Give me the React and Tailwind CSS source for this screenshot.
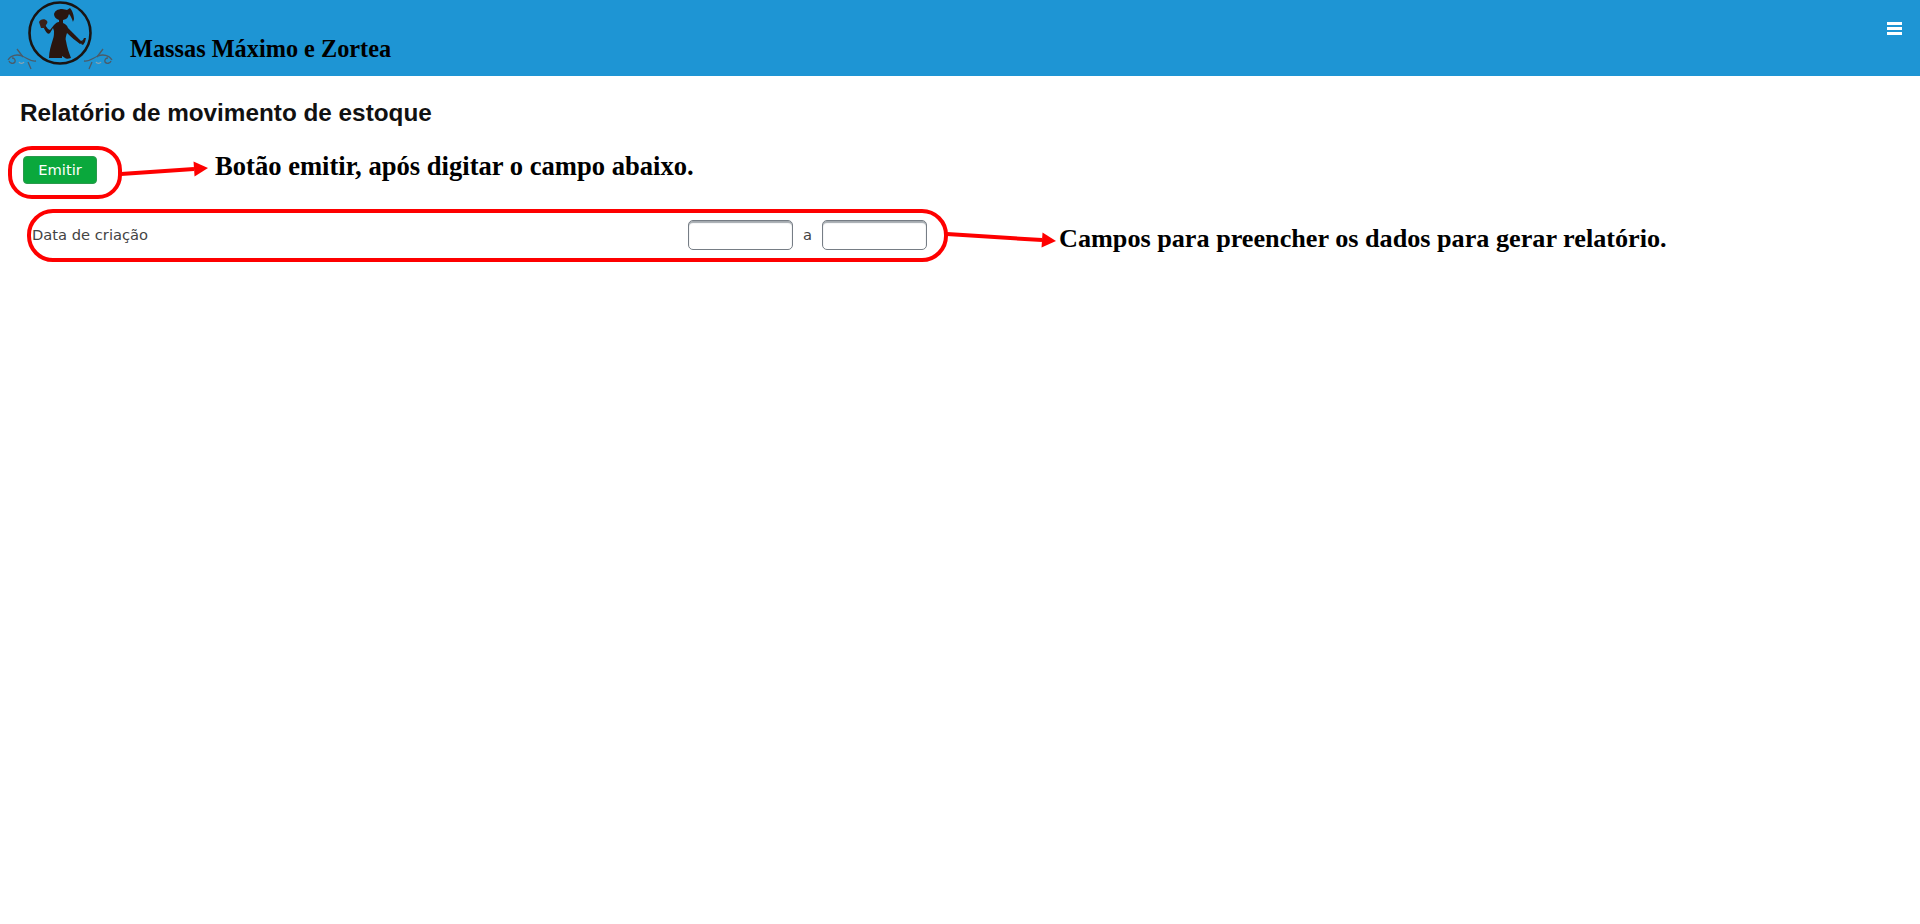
import React from 'react';

const Logo = () => (
    <svg width="114" height="76" viewBox="0 0 114 76" className="shrink-0 blur-[0.3px]">
        <circle cx="60" cy="33" r="30.5" fill="none" stroke="#1a1412" strokeWidth="2.6" />
        {/* woman silhouette */}
        <path d="M54 15c0-4 4-6 8-6 2 0 4 1 5 1l3-2c2 2 4 7 4 11 0 1-1 2-1 3-1-3-2-6-4-8-1 2-1 4-3 5l-3 1v3c2 1 4 2 5 5l11 11 2 2 2-1-1 3-2 1c-4-3-9-7-13-11-1 3-2 6-1 8 1 6 3 12 5 17-3 1-5 1-6 0l-3-2v2H49c0-6 2-13 4-19 1-3 1-5 1-8l-1-3-3 5c-1 1-2 1-3 0-2-2-3-5-4-7l2-1 3 4 2 1 4-5c2-2 3-3 5-3v-2c-3-1-5-3-5-6z" fill="#2a1610" />
        <path d="M39 22c1-3 6-4 8-1 1 1 0 3-1 4l-1 3h-4l-1-3z" fill="#3a2018" />
        <path d="M81 44l3-6 2 0-1 4-2 3z" fill="#2a1610" />
        {/* flourishes */}
        <g fill="none" stroke="#4b5b68" strokeWidth="1.3">
            <path d="M8 60c3-5 9-6 14-4s9 6 14 5" />
            <path d="M9 61a3.5 3.5 0 0 0 6 1 3 3 0 0 0-3-4" />
            <path d="M19 62a3 3 0 0 0 5 0" stroke="#8fa3b0" />
            <path d="M17 49l6 8M28 62l3 7" />
            <path d="M112 60c-3-5-9-6-14-4s-9 6-14 5" />
            <path d="M111 61a3.5 3.5 0 0 1-6 1 3 3 0 0 1 3-4" />
            <path d="M101 62a3 3 0 0 1-5 0" stroke="#8fa3b0" />
            <path d="M103 49l-6 8M92 62l-3 7" />
        </g>
    </svg>
);

const Arrow = ({ x1, y1, x2, y2 }) => {
    const a = Math.atan2(y2 - y1, x2 - x1);
    const len = 14, wid = 7.5;
    const bx = x2 - len * Math.cos(a), by = y2 - len * Math.sin(a);
    const nx = -Math.sin(a) * wid, ny = Math.cos(a) * wid;
    return (
        <g>
            <line x1={x1} y1={y1} x2={bx} y2={by} stroke="#fe0000" strokeWidth="4" />
            <polygon points={`${x2},${y2} ${bx + nx},${by + ny} ${bx - nx},${by - ny}`} fill="#fe0000" />
        </g>
    );
};

const DateInput = () => (
    <input
        type="text"
        className="w-[105px] h-[30px] bg-white rounded-[5px] border border-[#767d85] shadow-[inset_0_2px_1px_rgba(90,100,110,0.55)] outline-none"
    />
);

const Annotation = ({ className, children }) => (
    <span className={`absolute whitespace-nowrap font-['Liberation_Serif',serif] font-bold text-black leading-none ${className}`}>
        {children}
    </span>
);

export default function App() {
    return (
        <div className="relative min-h-[924px] bg-white overflow-hidden">
            <header className="h-[76px] bg-[#1e95d4] flex items-start relative">
                <Logo />
                <h1 className="ml-[16px] mt-[35px] font-['Liberation_Serif',serif] font-bold text-[24.3px] leading-[28px] text-black whitespace-nowrap">
                    Massas Máximo e Zortea
                </h1>
                <div className="ml-auto mr-[18px] mt-[22px] w-[15px] flex flex-col gap-[2px]">
                    <span className="h-[3px] bg-white" />
                    <span className="h-[3px] bg-white" />
                    <span className="h-[3px] bg-white" />
                </div>
            </header>

            <main className="px-5 pt-[23px]">
                <h2 className="font-['Liberation_Sans',sans-serif] font-bold text-[24.3px] leading-[27px] text-[#111]">
                    Relatório de movimento de estoque
                </h2>
                <button className="block ml-[3px] mt-[30px] w-[74px] h-[28px] pt-px bg-[#0aa83c] rounded-[4px] border border-[#2a9a4c] text-white font-['DejaVu_Sans',sans-serif] text-[14.7px] leading-none">
                    Emitir
                </button>
                <div className="mt-[36px] ml-[12px] w-[895px] h-[30px] flex items-center font-['DejaVu_Sans',sans-serif] text-[14.7px] text-[#444]">
                    <label className="flex-1">Data de criação</label>
                    <DateInput />
                    <span className="w-[29px] text-center">a</span>
                    <DateInput />
                </div>
            </main>

            {/* marcações em vermelho por cima da tela */}
            <div className="absolute left-[8px] top-[146px] w-[114px] h-[53px] rounded-[24px] border-[4px] border-[#fe0000]" />
            <div className="absolute left-[27px] top-[209px] w-[921px] h-[53px] rounded-[26px] border-[4px] border-[#fe0000]" />
            <svg className="absolute left-0 top-0 pointer-events-none" width="1920" height="300">
                <Arrow x1={121} y1={174} x2={208} y2={168} />
                <Arrow x1={947} y1={234} x2={1056} y2={241} />
            </svg>
            <Annotation className="left-[215px] top-[153px] text-[26.6px]">Botão emitir, após digitar o campo abaixo.</Annotation>
            <Annotation className="left-[1059px] top-[226px] text-[26.2px]">Campos para preencher os dados para gerar relatório.</Annotation>
        </div>
    );
}
